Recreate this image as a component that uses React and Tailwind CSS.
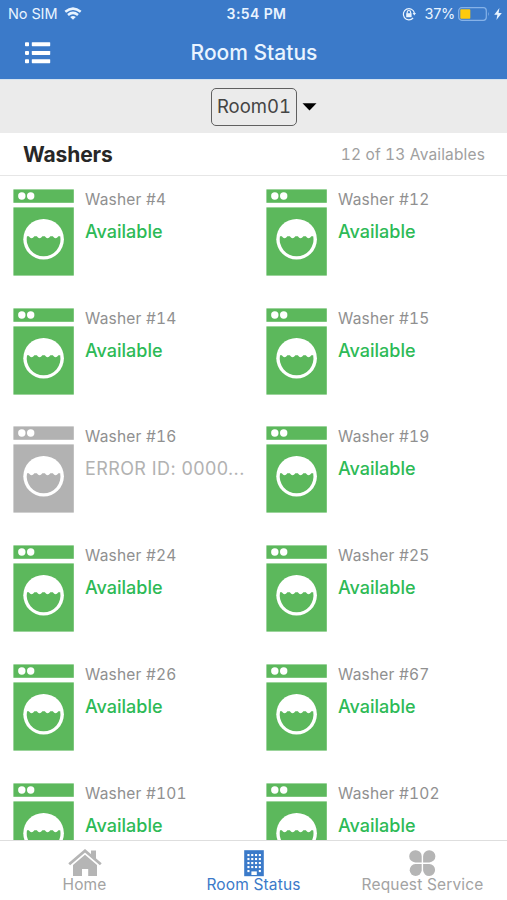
import { useState } from "react";

const washers = [
  { id: 4 },
  { id: 12 },
  { id: 14 },
  { id: 15 },
  { id: 16, error: "ERROR ID: 0000..." },
  { id: 19 },
  { id: 24 },
  { id: 25 },
  { id: 26 },
  { id: 67 },
  { id: 101 },
  { id: 102 },
];

function WasherIcon({ className }) {
  return (
    <svg viewBox="0 0 61 87" className={`h-[87px] w-[61px] shrink-0 ${className}`} fill="currentColor">
      <rect x="0.4" y="0.4" width="60.4" height="13.4" />
      <rect x="0.4" y="18.4" width="60.4" height="68.2" />
      <circle cx="8.8" cy="7" r="3.7" fill="white" />
      <circle cx="17.7" cy="7" r="3.7" fill="white" />
      <circle cx="30.6" cy="50.2" r="20.3" fill="white" />
      <path d="M14 47.2 H15.8 Q18.6 51.2 21.4 47.2 H23.8 Q26.6 51.2 29.4 47.2 H31.8 Q34.6 51.2 37.4 47.2 H39.8 Q42.6 51.2 45.4 47.2 H47.2 A16.9 16.9 0 1 1 14 47.2 Z" />
    </svg>
  );
}

function StatusBar() {
  return (
    <div className="flex h-[27px] items-center pl-2 pr-[5px] text-[14.5px]">
      <div className="flex flex-1 items-center gap-[7px]">
        <span className="tracking-[-0.1px]">No SIM</span>
        <svg viewBox="0 0 18 13" className="h-[13px] w-[18px]" fill="none" stroke="currentColor" strokeWidth="2.5">
          <path d="M1.3 4.8 Q9 -1.6 16.7 4.8" />
          <path d="M4 8 Q9 3.8 14 8" />
          <path d="M9 12.8 L6.2 10 Q9 7.8 11.8 10 Z" fill="currentColor" stroke="none" />
        </svg>
      </div>
      <span className="pl-[3px] text-[14px] font-semibold tracking-[0.4px]">3:54 PM</span>
      <div className="flex flex-1 items-center justify-end">
        <svg viewBox="0 0 14 14" className="mr-[8px] h-[14px] w-[14px]" fill="none" stroke="currentColor" strokeWidth="1.2">
          <path d="M11.1 11 A5.6 5.6 0 1 1 12.4 6" />
          <path d="M10.6 6 H14 L12.3 8.5 Z" fill="currentColor" stroke="none" />
          <rect x="4.2" y="6.2" width="5.4" height="4" fill="currentColor" stroke="none" />
          <path d="M5.2 6.5 V5.2 A1.7 1.7 0 0 1 8.6 5.2 V6.5" />
        </svg>
        <span className="mr-[3px] tracking-[-0.3px]">37%</span>
        <svg viewBox="0 0 32 14" className="mr-[4px] h-[14px] w-[32px]" fill="none">
          <rect x="0.7" y="0.7" width="27.6" height="12.6" rx="3" stroke="#86b2e8" strokeWidth="1.2" />
          <rect x="2.3" y="2.3" width="10" height="9.4" rx="0.8" fill="#fdca0c" />
          <path d="M30 4.8 Q31.6 7 30 9.2 Z" fill="#86b2e8" />
        </svg>
        <svg viewBox="0 0 8 12" className="h-3 w-2" fill="currentColor">
          <path d="M5.4 0 L0.2 6.8 H3.4 L2.4 12 L7.8 4.9 H4.6 Z" />
        </svg>
      </div>
    </div>
  );
}

function HomeIcon() {
  return (
    <svg viewBox="0 0 34 28" className="h-7 w-[34px]" fill="currentColor">
      <path d="M23 1.5 H28 V10.5 L23 6 Z" />
      <path d="M1.2 15.2 L17 1.8 L32.8 15.2" fill="none" stroke="currentColor" strokeWidth="2.8" />
      <path d="M17 5.8 L29 16 V27 H20.2 V20 H14 V27 H5 V16 Z" />
    </svg>
  );
}

function BuildingIcon() {
  const rows = [5, 9, 13, 17, 21];
  const cols = [3.4, 7.2, 11, 14.8];
  return (
    <svg viewBox="0 0 20 28" className="h-7 w-5" fill="currentColor">
      <rect x="0.2" y="1.2" width="19.6" height="26" />
      {rows.map((y) =>
        cols.map((x) => <rect key={`${x}-${y}`} x={x} y={y} width="2.1" height="2.1" fill="white" />)
      )}
      <rect x="6.4" y="20.6" width="7.4" height="6" fill="currentColor" />
      <rect x="7.4" y="22.4" width="5.4" height="3.6" fill="white" />
    </svg>
  );
}

function CloverIcon() {
  return (
    <svg viewBox="0.7 0 28 28" className="h-7 w-7" fill="currentColor">
      <path d="M7 1.2 A6 6 0 0 1 13.4 7.2 V13.4 H7 A6 6 0 0 1 7 1.2 Z" />
      <path d="M21 1.2 A6 6 0 0 1 21 13.4 H14.8 V7.2 A6 6 0 0 1 21 1.2 Z" />
      <path d="M7 15 H13.4 V21.3 A6 6 0 1 1 7 15 Z" />
      <path d="M14.8 15 H21 A6 6 0 1 1 14.8 21.3 Z" />
    </svg>
  );
}

const tabs = [
  { name: "Home", Icon: HomeIcon },
  { name: "Room Status", Icon: BuildingIcon },
  { name: "Request Service", Icon: CloverIcon },
];

export default function App() {
  const [tab, setTab] = useState("Room Status");

  return (
    <div className="flex h-[900px] w-[507px] flex-col overflow-hidden bg-white font-['Inter',sans-serif]">
      <header className="h-[79px] shrink-0 bg-[#3b7ac9] text-[#e9f4ff]">
        <StatusBar />
        <div className="flex h-[51px] items-center px-[25px]">
          <button className="flex-1 text-white">
            <svg viewBox="0 0 26 22" className="h-[22px] w-[26px]" fill="currentColor">
              <rect x="0" y="0.2" width="4" height="4" rx="0.8" />
              <rect x="6.8" y="0.2" width="18.4" height="4" rx="0.6" />
              <rect x="0" y="8.9" width="4" height="4" rx="0.8" />
              <rect x="6.8" y="8.9" width="18.4" height="4" rx="0.6" />
              <rect x="0" y="17.2" width="4" height="4" rx="0.8" />
              <rect x="6.8" y="17.2" width="18.4" height="4" rx="0.6" />
            </svg>
          </button>
          <h1 className="pl-px text-[21px] font-medium">Room Status</h1>
          <div className="flex-1" />
        </div>
      </header>

      <div className="flex h-[54px] shrink-0 items-center justify-center gap-[5px] border-t border-[#d3e2f0] bg-[#ebebeb] pl-[21px]">
        <button className="h-[38px] w-[86px] rounded-[5px] border-[1.5px] border-[#606060] text-[18.5px] tabular-nums text-[#444]">
          Room01
        </button>
        <svg viewBox="0 0 15 8" className="h-2 w-[15px]" fill="black">
          <path d="M0.5 0.3 H14.5 L7.5 7.6 Z" />
        </svg>
      </div>

      <div className="flex h-[43px] shrink-0 items-center justify-between border-b border-[#e6e6e6] pl-[23px] pr-[22px]">
        <h2 className="pt-px text-[21px] font-bold tracking-[-0.1px] text-[#272727]">Washers</h2>
        <span className="pt-px text-[15.5px] tabular-nums tracking-[0.15px] text-[#a0a0a0]">12 of 13 Availables</span>
      </div>

      <div className="min-h-0 flex-1 overflow-hidden">
        <div className="grid grid-cols-[253px_254px]">
          {washers.map((w) => (
            <div key={w.id} className="flex h-[118.74px] gap-[11px] pl-[13px] pt-[13px]">
              <WasherIcon className={w.error ? "text-[#b2b2b2]" : "text-[#5cb85c]"} />
              <div className="min-w-0 whitespace-nowrap pt-px">
                <p className="text-[15.5px] leading-5 tabular-nums tracking-[0.2px] text-[#909090]">Washer #{w.id}</p>
                <p
                  className={`mt-3 text-[18px] leading-5 ${
                    w.error ? "tracking-[0.4px] text-[#b2b2b2]" : "font-medium text-[#2dba56]"
                  }`}
                >
                  {w.error || "Available"}
                </p>
              </div>
            </div>
          ))}
        </div>
      </div>

      <nav className="grid h-[60px] shrink-0 grid-cols-3 border-t border-[#dedede] bg-white">
        {tabs.map(({ name, Icon }) => (
          <button
            key={name}
            onClick={() => setTab(name)}
            className={`flex flex-col items-center pt-2 ${tab === name ? "text-[#3b7ac9]" : "text-[#b5b5b5]"}`}
          >
            <Icon />
            <span className={`text-[15.5px] leading-4 tracking-[0.15px] ${tab === name ? "" : "text-[#a3a3a3]"}`}>
              {name}
            </span>
          </button>
        ))}
      </nav>
    </div>
  );
}
